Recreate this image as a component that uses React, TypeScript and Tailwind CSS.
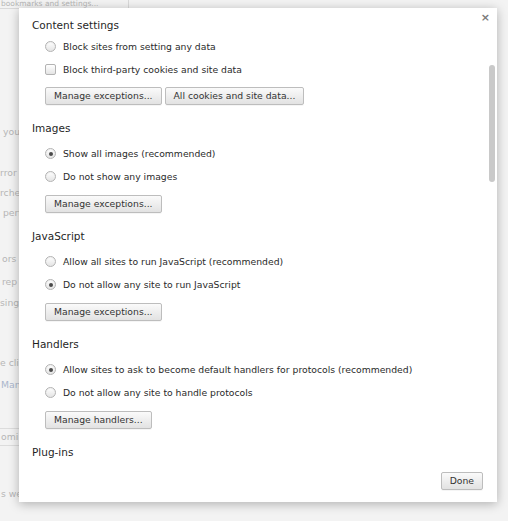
import type { ReactNode } from 'react'

function Radio({ checked }: { checked?: boolean }) {
  return (
    <span className="flex h-[11px] w-[11px] shrink-0 items-center justify-center rounded-full border border-[#b3b3b3] bg-linear-to-b from-[#ffffff] to-[#e4e4e4] shadow-[inset_0_1px_1px_rgba(0,0,0,0.06)]">
      {checked && <span className="h-[4px] w-[4px] rounded-full bg-[#4a4a4a]" />}
    </span>
  )
}

function Checkbox() {
  return (
    <span className="h-[11px] w-[11px] shrink-0 rounded-[2px] border border-[#b3b3b3] bg-linear-to-b from-[#ffffff] to-[#e4e4e4]" />
  )
}

function Option({ checked, box, children }: { checked?: boolean; box?: boolean; children: ReactNode }) {
  return (
    <div className="flex h-[23px] items-center gap-[7px] pl-[26px]">
      {box ? <Checkbox /> : <Radio checked={checked} />}
      <span>{children}</span>
    </div>
  )
}

function Button({ children }: { children: ReactNode }) {
  return (
    <button className="h-[18px] rounded-[2px] border border-[#bdbdbd] bg-linear-to-b from-[#fafafa] to-[#e2e2e2] px-[8px] leading-[16px] text-[#333] shadow-[0_1px_0_rgba(0,0,0,0.04)]">
      {children}
    </button>
  )
}

function Section({ title, children }: { title: string; children: ReactNode }) {
  return (
    <div className="pb-[10px]">
      <h3 className="flex h-[27px] items-center pl-[13px] text-[10.5px] text-[#1f1f1f]">{title}</h3>
      {children}
    </div>
  )
}

export default function App() {
  return (
    <div className="relative h-[521px] w-[508px] overflow-hidden bg-[#f3f3f3] font-['DejaVu_Sans','Noto_Sans',sans-serif] text-[9.25px]">
      {/* page behind the dialog, only the strip left of it shows */}
      <div className="flex flex-col whitespace-nowrap text-[#b6b6b6]">
        <div className="flex h-[9px] w-[129px] items-start border-b border-r border-[#d9d9d9] pl-[1px] text-[7.5px] leading-[8px]">
          bookmarks and settings...
        </div>
        <div className="mt-[117px] h-[12px] pl-[3px] leading-[12px]">you</div>
        <div className="mt-[29px] h-[12px] leading-[12px]">rror</div>
        <div className="mt-[8px] h-[12px] leading-[12px]">rche</div>
        <div className="mt-[8px] h-[12px] pl-[3px] leading-[12px]">perf</div>
        <div className="mt-[34px] h-[12px] pl-[2px] leading-[12px]">ors</div>
        <div className="mt-[11px] h-[12px] pl-[2px] leading-[12px]">rep</div>
        <div className="mt-[9px] h-[12px] leading-[12px]">sing</div>
        <div className="mt-[48px] h-[12px] leading-[12px]">e cli</div>
        <div className="mt-[10px] h-[12px] pl-[1px] leading-[12px] text-[#aab6cc]">Mana</div>
        <div className="mt-[37px] flex h-[18px] w-[19px] items-center border-y border-[#dcdcdc] pl-[1px]">omi</div>
        <div className="mt-[42px] h-[12px] pl-[1px] leading-[12px]">s we</div>
      </div>

      {/* dialog */}
      <div className="absolute left-[19px] top-[8px] flex h-[494px] w-[478px] flex-col bg-white text-[#2a2a2a] shadow-[0_2px_10px_rgba(0,0,0,0.28)]">
        <div className="h-[27px] pl-[13px] pt-[10px] text-[10.5px] leading-[14px] text-[#1f1f1f]">Content settings</div>
        <button className="absolute right-[7px] top-[4px] text-[11px] font-bold leading-[12px] text-[#7a7a7a]">×</button>

        <div className="h-[428px] overflow-hidden">
          <div className="pb-[10px]">
            <Option>Block sites from setting any data</Option>
            <Option box>Block third-party cookies and site data</Option>
            <div className="mt-[6px] flex gap-[3px] pl-[26px]">
              <Button>Manage exceptions...</Button>
              <Button>All cookies and site data...</Button>
            </div>
          </div>
          <Section title="Images">
            <Option checked>Show all images (recommended)</Option>
            <Option>Do not show any images</Option>
            <div className="mt-[7px] pl-[26px]">
              <Button>Manage exceptions...</Button>
            </div>
          </Section>
          <Section title="JavaScript">
            <Option>Allow all sites to run JavaScript (recommended)</Option>
            <Option checked>Do not allow any site to run JavaScript</Option>
            <div className="mt-[7px] pl-[26px]">
              <Button>Manage exceptions...</Button>
            </div>
          </Section>
          <Section title="Handlers">
            <Option checked>Allow sites to ask to become default handlers for protocols (recommended)</Option>
            <Option>Do not allow any site to handle protocols</Option>
            <div className="mt-[7px] pl-[26px]">
              <Button>Manage handlers...</Button>
            </div>
          </Section>
          <h3 className="flex h-[27px] items-center pl-[13px] text-[10.5px] text-[#1f1f1f]">Plug-ins</h3>
        </div>

        <div className="absolute right-[2px] top-[57px] h-[117px] w-[6px] rounded-full bg-[#c9c9c9]" />

        <div className="flex h-[39px] justify-end pr-[14px] pt-[9px]">
          <Button>Done</Button>
        </div>
      </div>
    </div>
  )
}
